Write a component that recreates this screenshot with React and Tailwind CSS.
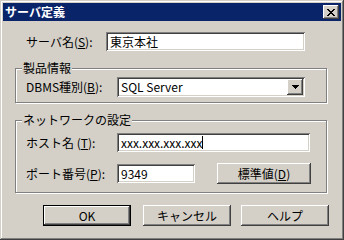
const raised =
  'bg-[#d4d0c8] shadow-[inset_-1px_-1px_#404040,inset_1px_1px_#ffffff,inset_-2px_-2px_#808080,inset_2px_2px_#d4d0c8]';
const sunken =
  'bg-white shadow-[inset_1px_1px_#808080,inset_-1px_-1px_#ffffff,inset_2px_2px_#404040,inset_-2px_-2px_#d4d0c8]';
const etched =
  'relative w-[312px] border border-[#808080] shadow-[inset_1px_1px_#ffffff,1px_1px_#ffffff]';

function CloseGlyph() {
  const rows = ['XX....XX', '.XX..XX.', '..XXXX..', '...XX...', '..XXXX..', '.XX..XX.', 'XX....XX'];
  return (
    <svg width="8" height="7" viewBox="0 0 8 7" shapeRendering="crispEdges">
      {rows.map((r, y) =>
        r.split('').map((c, x) => (c === 'X' ? <rect key={`${x}-${y}`} x={x} y={y} width="1" height="1" fill="#000" /> : null))
      )}
    </svg>
  );
}

function DownArrow() {
  return (
    <svg width="7" height="4" viewBox="0 0 7 4" shapeRendering="crispEdges">
      <rect x="0" y="0" width="7" height="1" fill="#000" />
      <rect x="1" y="1" width="5" height="1" fill="#000" />
      <rect x="2" y="2" width="3" height="1" fill="#000" />
      <rect x="3" y="3" width="1" height="1" fill="#000" />
    </svg>
  );
}

function GroupLabel({ children }) {
  return (
    <span className="absolute left-[6px] top-[-8px] px-[1px] bg-[#d4d0c8] leading-[14px]">{children}</span>
  );
}

export default function App() {
  return (
    <div className="w-[344px] h-[240px] bg-[#d4d0c8] p-[3px] flex flex-col font-['Noto_Sans_CJK_JP',sans-serif] text-[12px] leading-[14px] text-black shadow-[inset_-1px_-1px_#404040,inset_1px_1px_#d4d0c8,inset_-2px_-2px_#808080,inset_2px_2px_#ffffff]">
      {/* title bar */}
      <div className="h-[18px] bg-[#0a246a] flex items-center pl-[2px] pr-[2px]">
        <span className="text-white font-bold">サーバ定義</span>
        <div className={`ml-auto w-[16px] h-[14px] flex items-center justify-center ${raised}`}>
          <CloseGlyph />
        </div>
      </div>

      <div className="flex flex-col pl-[12px]">
        <div className="mt-[11px] h-[19px] flex items-center">
          <span className="ml-[11px] w-[80px]">
            サーバ名(<u>S</u>):
          </span>
          <div className={`w-[199px] h-[19px] flex items-center pl-[4px] ${sunken}`}>東京本社</div>
        </div>

        <div className={`mt-[17px] h-[35px] pt-[8px] ${etched}`}>
          <GroupLabel>製品情報</GroupLabel>
          <div className="h-[20px] flex items-center">
            <span className="ml-[10px] w-[91px]">
              DBMS種別(<u>B</u>):
            </span>
            <div className={`w-[188px] h-[20px] flex items-center pl-[4px] pr-[2px] ${sunken}`}>
              <span>SQL Server</span>
              <div className={`ml-auto w-[16px] h-[16px] flex items-center justify-center ${raised}`}>
                <DownArrow />
              </div>
            </div>
          </div>
        </div>

        <div className={`mt-[17px] h-[73px] pt-[12px] ${etched}`}>
          <GroupLabel>ネットワークの設定</GroupLabel>
          <div className="h-[19px] flex items-center">
            <span className="ml-[10px] w-[91px]">
              ホスト名 (<u>T</u>):
            </span>
            <div className={`w-[193px] h-[19px] flex items-center pl-[4px] ${sunken}`}>
              <span>xxx.xxx.xxx.xxx</span>
              <span className="w-px h-[13px] bg-black" />
            </div>
          </div>
          <div className="mt-[11px] h-[21px] flex items-center">
            <span className="ml-[10px] w-[91px]">
              ポート番号(<u>P</u>):
            </span>
            <div className={`w-[78px] h-[19px] flex items-center pl-[4px] ${sunken}`}>9349</div>
            <div className={`ml-[22px] w-[94px] h-[21px] flex items-center justify-center ${raised}`}>
              標準値(<u>D</u>)
            </div>
          </div>
        </div>

        <div className="mt-[12px] flex">
          <div className="ml-[28px] w-[88px] h-[21px] border border-black">
            <div className={`w-full h-full flex items-center justify-center ${raised}`}>OK</div>
          </div>
          <div className={`ml-[12px] w-[88px] h-[21px] flex items-center justify-center ${raised}`}>キャンセル</div>
          <div className={`ml-[10px] w-[88px] h-[21px] flex items-center justify-center ${raised}`}>ヘルプ</div>
        </div>
      </div>
    </div>
  );
}
